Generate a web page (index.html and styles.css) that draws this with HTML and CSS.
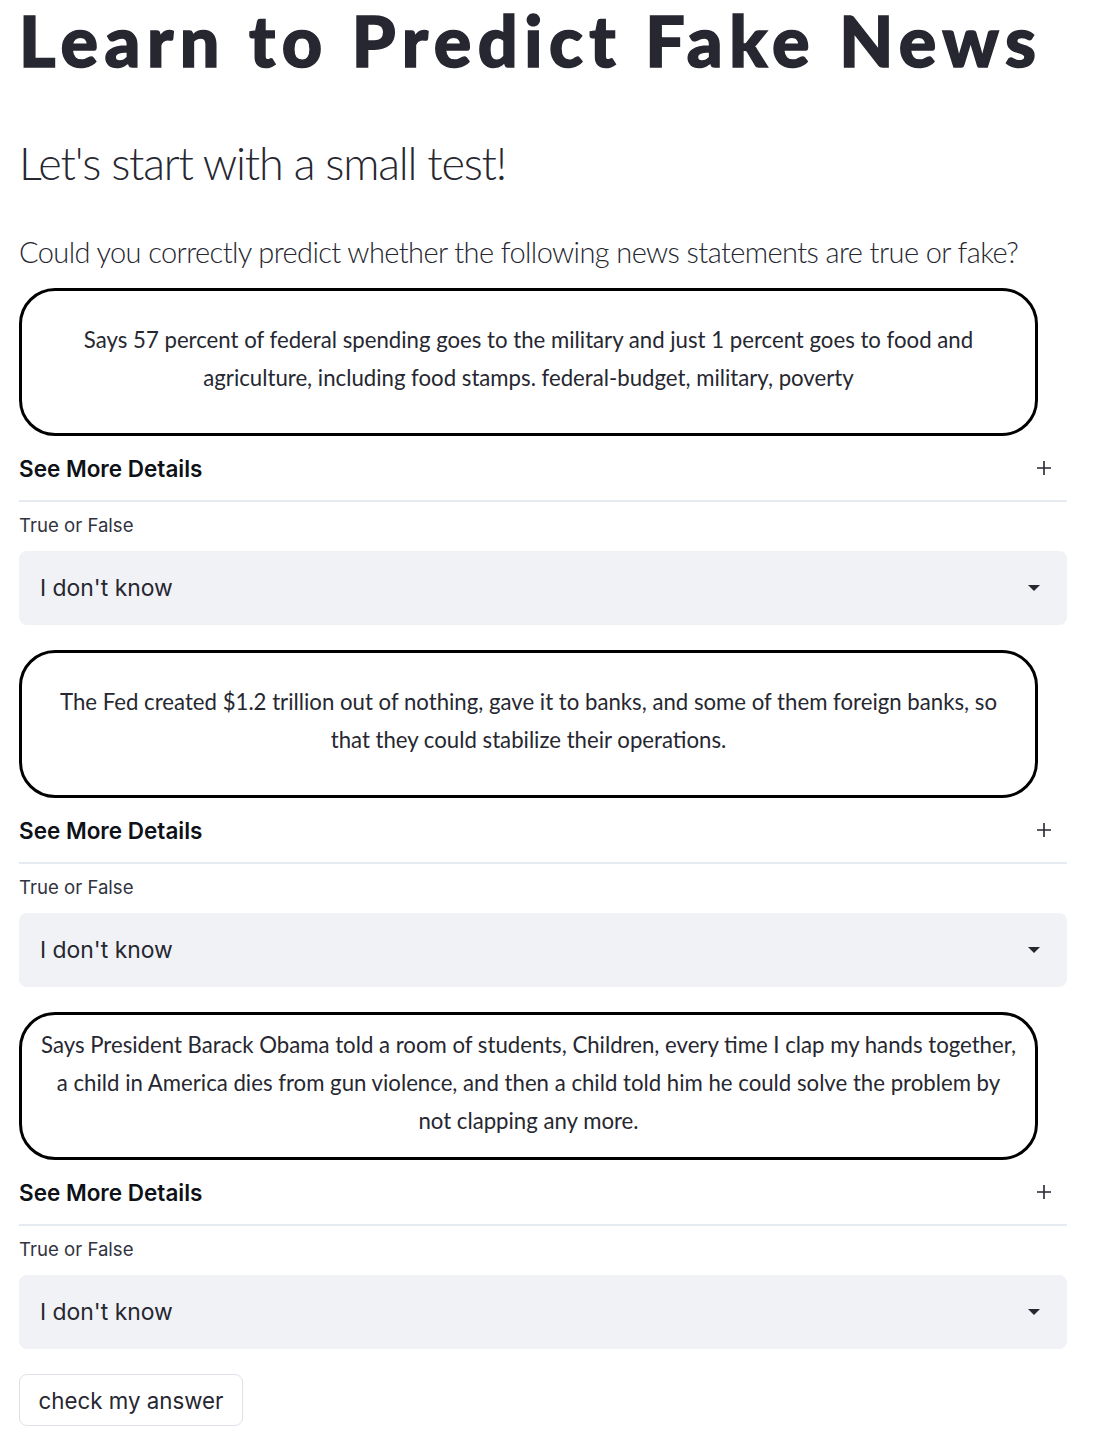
FILE: index.html
```html
<!DOCTYPE html>
<html>
<head>
<meta charset="utf-8">
<link rel="stylesheet" href="styles.css">
</head>
<body>
<main class="page">
  <h1 class="title">Learn to Predict Fake News</h1>
  <h2 class="subtitle">Let's start with a small test!</h2>
  <p class="intro">Could you correctly predict whether the following news statements are true or fake?</p>

  <section class="item">
    <div class="card"><p>Says 57 percent of federal spending goes to the military and just 1 percent goes to food and<br>agriculture, including food stamps. federal-budget, military, poverty</p></div>
    <div class="expander"><span>See More Details</span><svg class="plus" width="14" height="14" viewBox="0 0 14 14"><path d="M7 0v14M0 7h14" stroke="#262730" stroke-width="1.6"/></svg></div>
    <div class="label">True or False</div>
    <div class="select"><span>I don't know</span><svg class="caret" width="12" height="6" viewBox="0 0 12 6"><path d="M0 0h12L6 6z" fill="#262730"/></svg></div>
  </section>

  <section class="item">
    <div class="card"><p>The Fed created $1.2 trillion out of nothing, gave it to banks, and some of them foreign banks, so<br>that they could stabilize their operations.</p></div>
    <div class="expander"><span>See More Details</span><svg class="plus" width="14" height="14" viewBox="0 0 14 14"><path d="M7 0v14M0 7h14" stroke="#262730" stroke-width="1.6"/></svg></div>
    <div class="label">True or False</div>
    <div class="select"><span>I don't know</span><svg class="caret" width="12" height="6" viewBox="0 0 12 6"><path d="M0 0h12L6 6z" fill="#262730"/></svg></div>
  </section>

  <section class="item">
    <div class="card"><p>Says President Barack Obama told a room of students, Children, every time I clap my hands together,<br>a child in America dies from gun violence, and then a child told him he could solve the problem by<br>not clapping any more.</p></div>
    <div class="expander"><span>See More Details</span><svg class="plus" width="14" height="14" viewBox="0 0 14 14"><path d="M7 0v14M0 7h14" stroke="#262730" stroke-width="1.6"/></svg></div>
    <div class="label">True or False</div>
    <div class="select"><span>I don't know</span><svg class="caret" width="12" height="6" viewBox="0 0 12 6"><path d="M0 0h12L6 6z" fill="#262730"/></svg></div>
  </section>

  <button class="check">check my answer</button>
</main>
</body>
</html>
```

FILE: styles.css
```css
html, body {
  margin: 0;
  padding: 0;
  background: #ffffff;
}

.page {
  width: 1048px;
  padding-left: 19px;
  color: #262730;
  font-family: Inter, "Noto Sans", sans-serif;
}

.title {
  margin: 5px 0 0 0;
  font-family: Lato, sans-serif;
  font-weight: 900;
  font-size: 70px;
  line-height: 70px;
  letter-spacing: 6.5px;
  -webkit-text-stroke: 1.5px #262730;
  color: #262730;
  white-space: nowrap;
}

.subtitle {
  margin: 60px 0 0 0;
  font-family: Lato, sans-serif;
  font-weight: 300;
  font-size: 45px;
  line-height: 56px;
  letter-spacing: -1.2px;
  color: #262730;
}

.intro {
  margin: 44px 0 0 0;
  font-family: Lato, sans-serif;
  font-weight: 300;
  font-size: 29px;
  line-height: 34px;
  letter-spacing: -0.6px;
  white-space: nowrap;
  color: #262730;
}

.item {
  display: flex;
  flex-direction: column;
}

.intro + .item {
  margin-top: 19px;
}

.item + .item {
  margin-top: 25px;
}

.card {
  box-sizing: border-box;
  width: 1019px;
  height: 148px;
  border: 3px solid #000;
  border-radius: 36px;
  padding: 0 4px 6px 4px;
  display: flex;
  align-items: center;
  justify-content: center;
}

.card p {
  margin: 0;
  text-align: center;
  white-space: nowrap;
  font-family: Lato, sans-serif;
  font-weight: 400;
  font-size: 22.2px;
  line-height: 38px;
  color: #262730;
}

.expander {
  height: 64px;
  border-bottom: 2px solid #e6eaf1;
  display: flex;
  align-items: center;
  justify-content: space-between;
  font-size: 22.5px;
  font-weight: 600;
  color: #0e1117;
}

.plus {
  margin-right: 16px;
}

.label {
  box-sizing: border-box;
  height: 49px;
  padding-bottom: 4px;
  display: flex;
  align-items: center;
  font-size: 18.6px;
  color: #31333f;
}

.select {
  height: 74px;
  border-radius: 8px;
  background: #f0f2f6;
  display: flex;
  align-items: center;
  justify-content: space-between;
  padding: 0 27px 0 21px;
  font-size: 22.9px;
  color: #262730;
}

.check {
  margin-top: 25px;
  width: 224px;
  height: 52px;
  background: #fff;
  border: 1px solid #dfe2e8;
  border-radius: 8px;
  font-family: Inter, "Noto Sans", sans-serif;
  font-size: 22.3px;
  color: #262730;
  padding: 0;
}
```
